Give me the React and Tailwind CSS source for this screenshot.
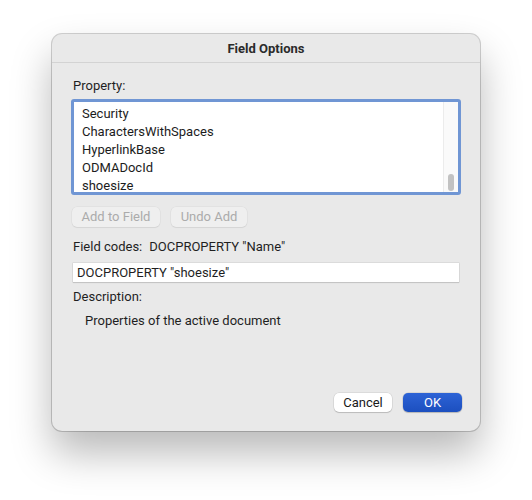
import React from 'react'

const items = ['Security', 'CharactersWithSpaces', 'HyperlinkBase', 'ODMADocId', 'shoesize']

const App = () => {
  return (
    <div
      className="w-[532px] h-[500px] bg-white pt-[34px] pl-[52px] text-[13px] text-[#1f1f1f]"
      style={{ fontFamily: 'Roboto, "Liberation Sans", Arial, sans-serif' }}
    >
      <div className="w-[428px] h-[397px] rounded-[10px] bg-[#e9e9e9] flex flex-col shadow-[0_0_0_1px_rgba(0,0,0,0.18),0_22px_40px_rgba(0,0,0,0.28)]">
        {/* Title bar */}
        <div className="h-[29px] pt-[1px] shrink-0 border-b border-[#d3d3d3] flex items-center justify-center font-bold text-[#2b2b2b]">
          Field Options
        </div>

        <div className="flex-1 flex flex-col px-[21px] pb-[19px]">
          <div className="mt-[15px] leading-4">Property:</div>

          {/* List box */}
          <div className="mt-[5px] -mx-[2px] h-[96px] border-[3px] border-[#7096d4] rounded-[3px] bg-white flex overflow-hidden">
            <div className="flex-1 overflow-hidden pl-[8px] pt-[3px]">
              {items.map((it) => (
                <div key={it} className="h-[18px] leading-[18px] text-[#1c1c1c]">
                  {it}
                </div>
              ))}
            </div>
            <div className="w-[15px] border-l border-[#ececec] bg-[#fafafa] flex flex-col justify-end items-center pb-[1px]">
              <div className="w-[6px] h-[17px] rounded-full bg-[#c2c2c2]" />
            </div>
          </div>

          {/* Disabled buttons */}
          <div className="mt-[12px] flex gap-[11px] -ml-[1px]">
            <div className="w-[88px] h-[20px] rounded-[5px] bg-[#efefef] shadow-[0_0_0_0.5px_rgba(0,0,0,0.06),0_1px_1px_rgba(0,0,0,0.06)] text-[#ababab] flex items-center justify-center">
              Add to Field
            </div>
            <div className="w-[76px] h-[20px] rounded-[5px] bg-[#efefef] shadow-[0_0_0_0.5px_rgba(0,0,0,0.06),0_1px_1px_rgba(0,0,0,0.06)] text-[#ababab] flex items-center justify-center">
              Undo Add
            </div>
          </div>

          <div className="mt-[12px] leading-4 flex">
            <span>Field codes:</span>
            <span className="ml-[7px]">DOCPROPERTY "Name"</span>
          </div>

          <div className="mt-[8px] h-[19px] bg-white shadow-[0_0_0_0.5px_rgba(0,0,0,0.12),0_1px_1px_rgba(0,0,0,0.1)] flex items-center pl-[4px]">
            DOCPROPERTY "shoesize"
          </div>

          <div className="mt-[7px] leading-4">Description:</div>
          <div className="mt-[8px] leading-4 pl-[12px]">Properties of the active document</div>

          <div className="mt-auto flex justify-end gap-[11px] -mr-[3px]">
            <div className="w-[58px] h-[19px] rounded-[5px] bg-white shadow-[0_0_0_0.5px_rgba(0,0,0,0.12),0_1px_1px_rgba(0,0,0,0.15)] flex items-center justify-center text-[#1a1a1a]">
              Cancel
            </div>
            <div className="w-[59px] h-[19px] rounded-[5px] bg-gradient-to-b from-[#2d63d6] to-[#1c4fbf] shadow-[0_0_0_0.5px_rgba(0,0,0,0.15),0_1px_1px_rgba(0,0,0,0.15)] flex items-center justify-center text-white">
              OK
            </div>
          </div>
        </div>
      </div>
    </div>
  )
}

export default App
